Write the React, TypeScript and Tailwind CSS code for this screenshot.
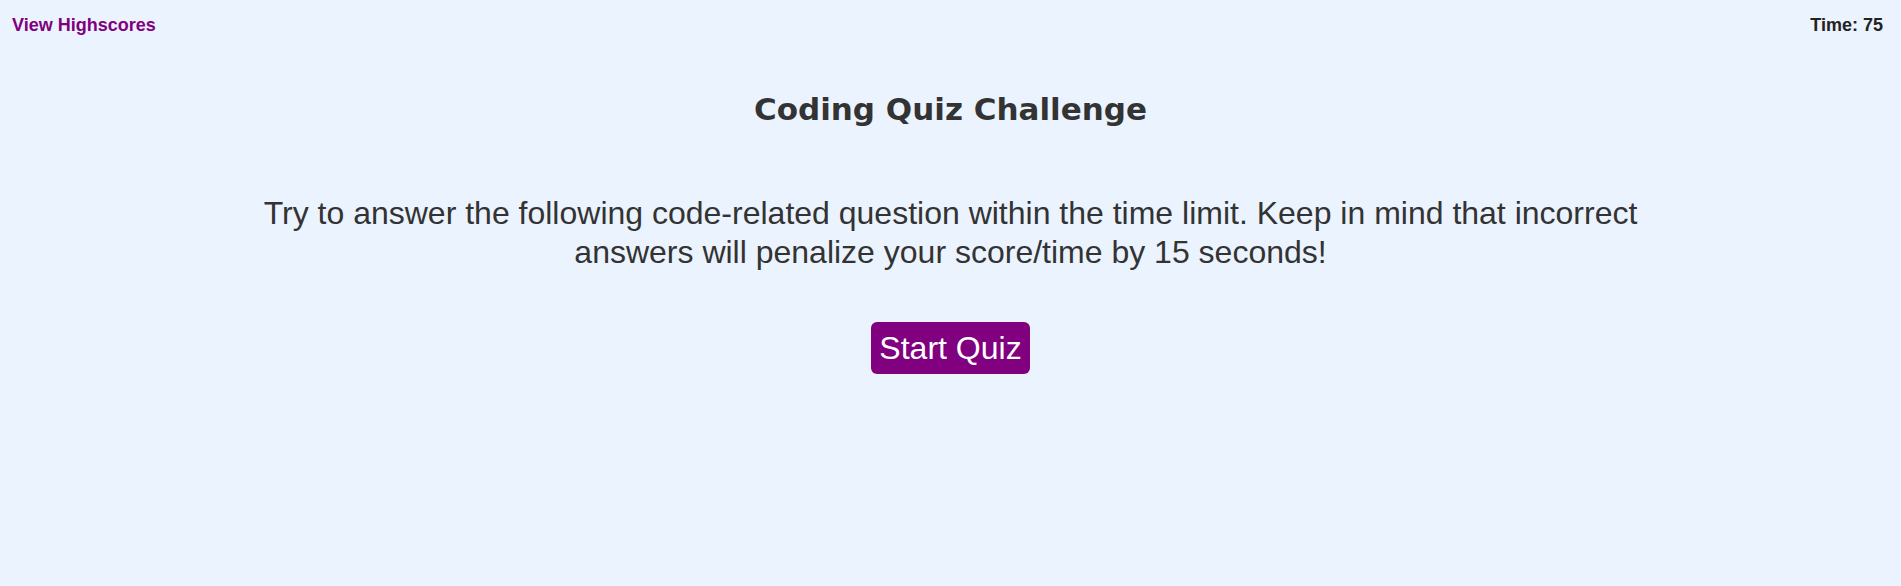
import React from "react"

export default function App() {
    return (
        <div className="min-h-[586px] w-full bg-[#ebf3ff] text-[#333333] font-['Liberation_Sans',Arial,sans-serif]">
            {/* Header */}
            <header className="flex items-start justify-between px-3 pt-[15px] leading-[21px]">
                <a href="#" className="text-[18px] font-bold text-[#800080]">
                    View Highscores
                </a>
                <div className="text-[18px] font-bold text-[#222222] pr-[6px]">Time: 75</div>
            </header>

            <main className="flex flex-col items-center">
                <h1 className="mt-[53px] font-['DejaVu_Sans',sans-serif] text-[31px] leading-[40px] font-bold">
                    Coding Quiz Challenge
                </h1>
                <p className="mt-[65px] max-w-[1420px] text-center text-[32px] leading-[39px]">
                    Try to answer the following code-related question within the time limit. Keep in mind that incorrect answers will penalize your score/time by 15 seconds!
                </p>
                <button className="mt-[50px] rounded-[6px] bg-[#800080] px-[8px] py-[7px] text-[32px] leading-[38px] text-white">
                    Start Quiz
                </button>
            </main>
        </div>
    )
}
